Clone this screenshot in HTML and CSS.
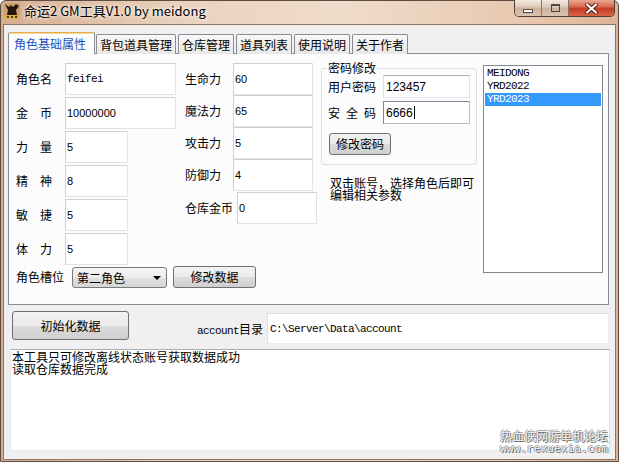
FILE: index.html
```html
<!DOCTYPE html>
<html lang="zh-CN">
<head>
  <meta charset="UTF-8" />
  <title>命运2 GM工具V1.0 by meidong</title>
  <link rel="stylesheet" href="styles.css">
</head>
<body>
  <div class="window">
    <div class="titlebar">
      <svg class="app-icon" width="16" height="16" viewBox="0 0 16 16">
        <rect width="16" height="16" fill="#c9a272"/>
        <path d="M1 1 L5 4 L7 2 L9 4 L12 1 L15 3 L12 7 L13 12 L3 12 L4 7 Z" fill="#24160d"/>
        <rect y="12" width="16" height="4" fill="#d9b14a"/>
        <path d="M3 13h2v2H3zM7 13h2v2H7zM11 13h2v2h-2z" fill="#5a3a10"/>
      </svg>
      <span class="title">命运2 GM工具V1.0 by meidong</span>
      <div class="caption">
        <span class="cap cap-min"><i></i></span>
        <span class="cap cap-max"><i></i></span>
        <span class="cap cap-close">
          <svg width="13" height="11" viewBox="0 0 13 11">
            <path d="M2 1.5 L11 9.5 M11 1.5 L2 9.5" stroke="#5a1a10" stroke-width="4" stroke-linecap="round"/>
            <path d="M2 1.5 L11 9.5 M11 1.5 L2 9.5" stroke="#fff" stroke-width="2.2" stroke-linecap="round"/>
          </svg>
        </span>
      </div>
    </div>

    <div class="client">
      <div class="tabs">
        <div class="tab active">角色基础属性</div>
        <div class="tab">背包道具管理</div>
        <div class="tab">仓库管理</div>
        <div class="tab">道具列表</div>
        <div class="tab">使用说明</div>
        <div class="tab">关于作者</div>
      </div>

      <div class="page">
        <div class="main">
          <div class="stats">
            <div class="base">
              <div class="field"><label>角色名</label><div class="edit wide mono">feifei</div></div>
              <div class="field"><label>金　币</label><div class="edit wide">10000000</div></div>
              <div class="field"><label>力　量</label><div class="edit">5</div></div>
              <div class="field"><label>精　神</label><div class="edit">8</div></div>
              <div class="field"><label>敏　捷</label><div class="edit">5</div></div>
              <div class="field"><label>体　力</label><div class="edit">5</div></div>
            </div>
            <div class="attr">
              <div class="field"><label>生命力</label><div class="edit">60</div></div>
              <div class="field"><label>魔法力</label><div class="edit">65</div></div>
              <div class="field"><label>攻击力</label><div class="edit">5</div></div>
              <div class="field"><label>防御力</label><div class="edit">4</div></div>
              <div class="field gold"><label>仓库金币</label><div class="edit">0</div></div>
            </div>
          </div>
          <div class="slot">
            <label>角色槽位</label>
            <div class="combo">第二角色</div>
            <button class="btn">修改数据</button>
          </div>
        </div>

        <div class="side">
          <fieldset class="group">
            <legend>密码修改</legend>
            <div class="pwd-row"><label>用户密码</label><div class="edit">123457</div></div>
            <div class="pwd-row"><label class="spaced">安全码</label><div class="edit focus">6666<span class="caret"></span></div></div>
            <button class="btn">修改密码</button>
          </fieldset>
          <p class="hint">双击账号，选择角色后即可<br>编辑相关参数</p>
        </div>

        <ul class="accounts mono">
          <li>MEIDONG</li>
          <li>YRD2022</li>
          <li class="selected">YRD2023</li>
        </ul>
      </div>

      <div class="toolbar">
        <button class="btn init">初始化数据</button>
        <span class="path-label"><span class="mono">account</span>目录</span>
        <div class="edit path mono">C:\Server\Data\account</div>
      </div>

      <div class="log">本工具只可修改离线状态账号获取数据成功<br>读取仓库数据完成</div>

      <div class="watermark">
        <div>热血侠网游单机论坛</div>
        <div class="mono">www.rexuexia.com</div>
      </div>
    </div>
  </div>
</body>
</html>
```

FILE: styles.css
```css
* {
  box-sizing: border-box;
}

body {
  margin: 0;
  width: 619px;
  height: 462px;
  overflow: hidden;
  font-family: "Noto Sans CJK SC", sans-serif;
  font-size: 12px;
  line-height: 14px;
  color: #000;
  background: #fff;
}

.mono {
  font-family: "Liberation Mono", "Noto Sans CJK SC", monospace;
  font-size: 11px;
  letter-spacing: -0.6px;
}

/* window frame */
.window {
  display: flex;
  flex-direction: column;
  width: 619px;
  height: 462px;
  padding: 0 2px 1px;
  border: 1px solid #5e4c40;
  border-radius: 6px 6px 0 0;
  background: linear-gradient(90deg, #d5ae90 0%, #ebd2bd 30%, #f0dccb 55%, #e8c8af 85%, #dcb497 100%);
}

.titlebar {
  display: flex;
  align-items: flex-start;
  flex: none;
  height: 23px;
}

.app-icon {
  margin: 2px 0 0 1px;
}

.title {
  margin: 1px 0 0 4px;
  font-size: 13px;
  line-height: 18px;
  text-shadow: 0 0 6px #fff, 0 0 3px #fff;
}

.caption {
  display: flex;
  height: 17px;
  margin: -1px 1px 0 auto;
  border: 1px solid #4f4037;
  border-top: 0;
  border-radius: 0 0 5px 5px;
  overflow: hidden;
}

.cap {
  display: flex;
  align-items: center;
  justify-content: center;
  width: 27px;
  border-right: 1px solid #8a7462;
  background: linear-gradient(#f3e8df, #ddc9ba 45%, #cdb29e 50%, #dcc3ae);
}

.cap i {
  display: block;
  background: #fff;
  border: 1px solid #4a4a4a;
}

.cap-min i {
  width: 10px;
  height: 4px;
  margin-top: 5px;
}

.cap-max i {
  width: 9px;
  height: 8px;
  border-top-width: 2px;
  background: transparent;
}

.cap-close {
  width: 45px;
  border-right: 0;
  background: linear-gradient(#eaa796, #d5664d 45%, #c23a1e 50%, #d9624a);
}

/* client area */
.client {
  position: relative;
  flex: 1;
  padding: 7px 5px 0 4px;
  border: 1px solid #8a7666;
  background: #f0f0f0;
}

.tabs {
  display: flex;
  align-items: flex-end;
  height: 22px;
}

.tab {
  height: 20px;
  margin-right: 2px;
  padding: 0 3px;
  border: 1px solid #898c95;
  border-bottom: 0;
  border-radius: 2px 2px 0 0;
  background: linear-gradient(#f8f8f8, #e8e8e8);
  line-height: 19px;
  white-space: nowrap;
}

.tab.active {
  position: relative;
  z-index: 1;
  height: 22px;
  margin-right: 1px;
  padding: 0 8px 0 5px;
  border-top-color: #e2ad55;
  box-shadow: inset 0 1px 0 #f7d890;
  background: #fcfcfc;
  color: #2250c0;
  line-height: 21px;
}

.page {
  display: flex;
  align-items: flex-start;
  height: 252px;
  margin: -1px 1px 0 0;
  padding: 9px 6px 0 7px;
  border: 1px solid #898c95;
  background: #fcfcfc;
}

.stats {
  display: flex;
  align-items: flex-start;
}

.base {
  display: flex;
  flex-direction: column;
  gap: 2px;
  width: 160px;
}

.attr {
  display: flex;
  flex-direction: column;
  margin-left: 9px;
}

.field {
  display: flex;
  align-items: center;
  height: 32px;
}

.field label {
  flex: none;
  width: 49px;
}

.attr .field label {
  width: 48px;
}

.attr .gold {
  margin-top: 1px;
}

.attr .gold label {
  width: 52px;
}

.edit {
  display: flex;
  align-items: center;
  flex: none;
  width: 63px;
  height: 32px;
  padding: 0 1px;
  border: 1px solid;
  border-color: #d0d0d0 #e2e2e2 #e2e2e2 #d0d0d0;
  background: #fff;
  font-family: "Liberation Sans", sans-serif;
  font-size: 11px;
}

.edit.mono {
  font-family: "Liberation Mono", monospace;
  letter-spacing: -0.6px;
}

.edit.wide {
  width: 111px;
}

.attr .edit {
  width: 80px;
}

.slot {
  display: flex;
  align-items: center;
  height: 22px;
  margin-top: 1px;
}

.slot label {
  width: 56px;
}

.combo {
  position: relative;
  width: 95px;
  height: 21px;
  padding: 0 4px;
  border: 1px solid #7a7a7a;
  border-radius: 3px;
  background: linear-gradient(#f6f6f6, #ececec 50%, #e0e0e0 51%, #d6d6d6);
  line-height: 19px;
}

.combo::after {
  content: "";
  position: absolute;
  right: 5px;
  top: 8px;
  border: 4px solid transparent;
  border-top: 4px solid #000;
  border-bottom: 0;
}

.btn {
  height: 22px;
  padding: 0;
  border: 1px solid #707070;
  border-radius: 3px;
  background: linear-gradient(#f2f2f2, #ebebeb 50%, #dddddd 51%, #cfcfcf);
  font: inherit;
  color: #000;
}

.slot .btn {
  width: 83px;
  margin-left: 6px;
}

/* password group */
.side {
  width: 156px;
  margin-left: 4px;
}

.group {
  width: 156px;
  margin: -2px 0 0;
  padding: 0 5px 9px 6px;
  border: 1px solid #d5dfe5;
  border-radius: 3px;
}

.group legend {
  margin-left: -1px;
  padding: 0 1px;
  line-height: 14px;
}

.pwd-row {
  display: flex;
  align-items: center;
}

.pwd-row + .pwd-row {
  margin-top: 3px;
}

.pwd-row label {
  width: 55px;
}

.pwd-row .spaced {
  letter-spacing: 6px;
}

.pwd-row .edit {
  width: 87px;
  height: 23px;
  padding: 0 2px;
  border-color: #abadb3 #dbdfe6 #e3e9ef #e2e3ea;
  font-size: 12px;
}

.pwd-row .edit.focus {
  border-color: #7b8794 #b5bfc9 #b5bfc9 #7b8794;
}

.caret {
  width: 1px;
  height: 13px;
  margin-left: 1px;
  background: #000;
}

.group .btn {
  width: 62px;
  margin: 9px 0 0 1px;
}

.hint {
  margin: 12px 0 0 9px;
  line-height: 12px;
}

.accounts {
  flex: none;
  width: 120px;
  height: 208px;
  margin: 2px 0 0 6px;
  padding: 1px;
  border: 1px solid #828790;
  background: #fff;
  list-style: none;
}

.accounts li {
  padding-left: 2px;
  line-height: 13px;
}

.accounts .selected {
  background: #3399ff;
  color: #fff;
}

/* bottom of the form */
.toolbar {
  display: flex;
  align-items: flex-start;
  margin-top: 6px;
}

.btn.init {
  width: 117px;
  height: 29px;
  margin-left: 4px;
}

.path-label {
  width: 134px;
  margin-top: 2px;
  line-height: 31px;
  text-align: right;
}

.edit.path {
  width: 342px;
  height: 31px;
  margin: 2px 0 0 4px;
  padding: 0 2px;
  border-color: #e0e0e0 #ececec #ececec #e0e0e0;
}

.log {
  height: 102px;
  margin: 2px 0 0 2px;
  padding: 1px;
  border: 1px solid;
  border-color: #abadb3 #dbdfe6 #e3e9ef #e2e3ea;
  background: #fff;
  line-height: 12px;
}

.watermark {
  position: absolute;
  top: 404px;
  right: 7px;
  color: #f2f2f2;
  line-height: 13px;
  text-align: right;
  text-shadow: 1px 1px 0 #6a6a6a, -1px 0 0 #9a9a9a, 0 -1px 0 #a8a8a8;
}

.watermark .mono {
  letter-spacing: 0.15px;
  line-height: 12px;
  margin-top: 1px;
}
```
